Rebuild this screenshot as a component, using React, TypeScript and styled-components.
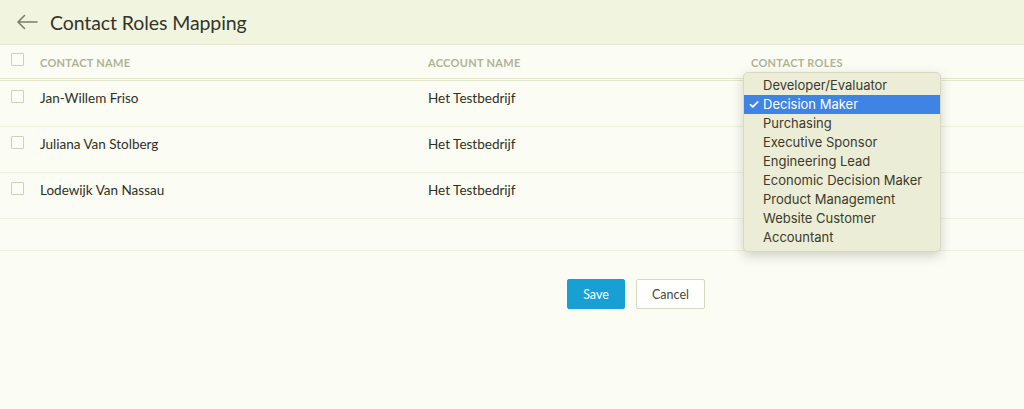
import React from "react";
import styled, { createGlobalStyle } from "styled-components";

const Global = createGlobalStyle`
  html, body { margin: 0; padding: 0; background: #fbfcf4; }
  body { font-family: Lato, "Open Sans", sans-serif; color: #333322; }
`;

const Page = styled.div`
  width: 1024px;
  height: 409px;
  background: #fbfcf4;
  display: flex;
  flex-direction: column;
`;

const Header = styled.header`
  height: 45px;
  box-sizing: border-box;
  background: #f1f4df;
  border-bottom: 1px solid #e6e9d0;
  display: flex;
  align-items: center;
  padding-left: 16px;
  gap: 12px;
`;

const Title = styled.h1`
  margin: 0;
  font-family: Lato, sans-serif;
  font-weight: 400;
  font-size: 19.5px;
  color: #34342a;
  letter-spacing: -0.1px;
`;

const Table = styled.div`
  display: flex;
  flex-direction: column;
`;

const HeadRow = styled.div`
  height: 36px;
  box-sizing: border-box;
  display: grid;
  grid-template-columns: 40px 388px 323px 1fr;
  align-items: start;
  border-bottom: 3px double #e3e6cd;
`;

const HeadCell = styled.div`
  padding-top: 11px;
  font-family: Lato, sans-serif;
  font-size: 11px;
  font-weight: 700;
  color: #b1b395;
  letter-spacing: 0.3px;
  text-transform: uppercase;
`;

const Row = styled.div<{ $h?: number }>`
  height: ${(p) => p.$h ?? 46}px;
  box-sizing: border-box;
  display: grid;
  grid-template-columns: 40px 388px 323px 1fr;
  align-items: start;
  border-bottom: 1px solid #eef0dc;
`;

const Cell = styled.div`
  position: relative;
  padding-top: 9px;
  font-family: Lato, sans-serif;
  font-size: 13.5px;
  color: #2f3024;
`;

const BoxCell = styled.div<{ $top: number }>`
  padding-left: 11px;
  padding-top: ${(p) => p.$top}px;
`;

const Check = styled.span`
  display: block;
  width: 11px;
  height: 11px;
  border: 1px solid #cfd1b8;
  border-radius: 1px;
  background: #fdfdf8;
`;

const HeadBox = styled.div`
  padding-left: 11px;
  padding-top: 8px;
`;

const Menu = styled.div`
  position: absolute;
  left: -8px;
  top: -9px;
  width: 198px;
  box-sizing: border-box;
  padding: 3px 0 5px;
  background: #ecedd6;
  border: 1px solid #d8d9c2;
  border-radius: 5px;
  box-shadow: 0 4px 12px rgba(60, 60, 30, 0.22);
  z-index: 10;
`;

const Item = styled.div<{ $active?: boolean }>`
  height: 18.9px;
  display: flex;
  align-items: center;
  padding-left: 19px;
  position: relative;
  font-family: Inter, "Liberation Sans", sans-serif;
  font-size: 13px;
  color: ${(p) => (p.$active ? "#ffffff" : "#3b3a2c")};
  background: ${(p) => (p.$active ? "#3f84e4" : "transparent")};
`;

const Tick = styled.span`
  position: absolute;
  left: 4px;
  top: 1px;
  font-size: 13px;
  font-weight: 600;
`;

const Actions = styled.div`
  display: flex;
  gap: 11px;
  padding-top: 28px;
  padding-left: 567px;
`;

const Button = styled.button<{ $primary?: boolean }>`
  height: 30px;
  box-sizing: border-box;
  padding: 0 14px;
  font-family: Lato, sans-serif;
  font-size: 12.5px;
  border-radius: 2px;
  cursor: pointer;
  color: ${(p) => (p.$primary ? "#ffffff" : "#4a4a38")};
  background: ${(p) => (p.$primary ? "#189fd4" : "#ffffff")};
  border: 1px solid ${(p) => (p.$primary ? "#189fd4" : "#d8d8be")};
  min-width: ${(p) => (p.$primary ? 58 : 69)}px;
`;

const Back = () => (
  <svg width="22" height="16" viewBox="0 0 22 16" fill="none">
    <path d="M21 8H2M8.5 1.5L2 8l6.5 6.5" stroke="#7d7d68" strokeWidth="1.6" strokeLinecap="round" strokeLinejoin="round" />
  </svg>
);

const roles = [
  "Developer/Evaluator",
  "Decision Maker",
  "Purchasing",
  "Executive Sponsor",
  "Engineering Lead",
  "Economic Decision Maker",
  "Product Management",
  "Website Customer",
  "Accountant",
];

const people = ["Jan-Willem Friso", "Juliana Van Stolberg", "Lodewijk Van Nassau"];

export default function App() {
  return (
    <Page>
      <Global />
      <Header>
        <Back />
        <Title>Contact Roles Mapping</Title>
      </Header>
      <Table>
        <HeadRow>
          <HeadBox>
            <Check />
          </HeadBox>
          <HeadCell>Contact Name</HeadCell>
          <HeadCell>Account Name</HeadCell>
          <HeadCell>Contact Roles</HeadCell>
        </HeadRow>
        {people.map((name, i) => (
          <Row key={name}>
            <BoxCell $top={9}>
              <Check />
            </BoxCell>
            <Cell>{name}</Cell>
            <Cell>Het Testbedrijf</Cell>
            <Cell>
              {i === 0 && (
                <Menu>
                  {roles.map((r) => (
                    <Item key={r} $active={r === "Decision Maker"}>
                      {r === "Decision Maker" && <Tick>✓</Tick>}
                      {r}
                    </Item>
                  ))}
                </Menu>
              )}
            </Cell>
          </Row>
        ))}
        <Row $h={32} />
      </Table>
      <Actions>
        <Button $primary>Save</Button>
        <Button>Cancel</Button>
      </Actions>
    </Page>
  );
}
